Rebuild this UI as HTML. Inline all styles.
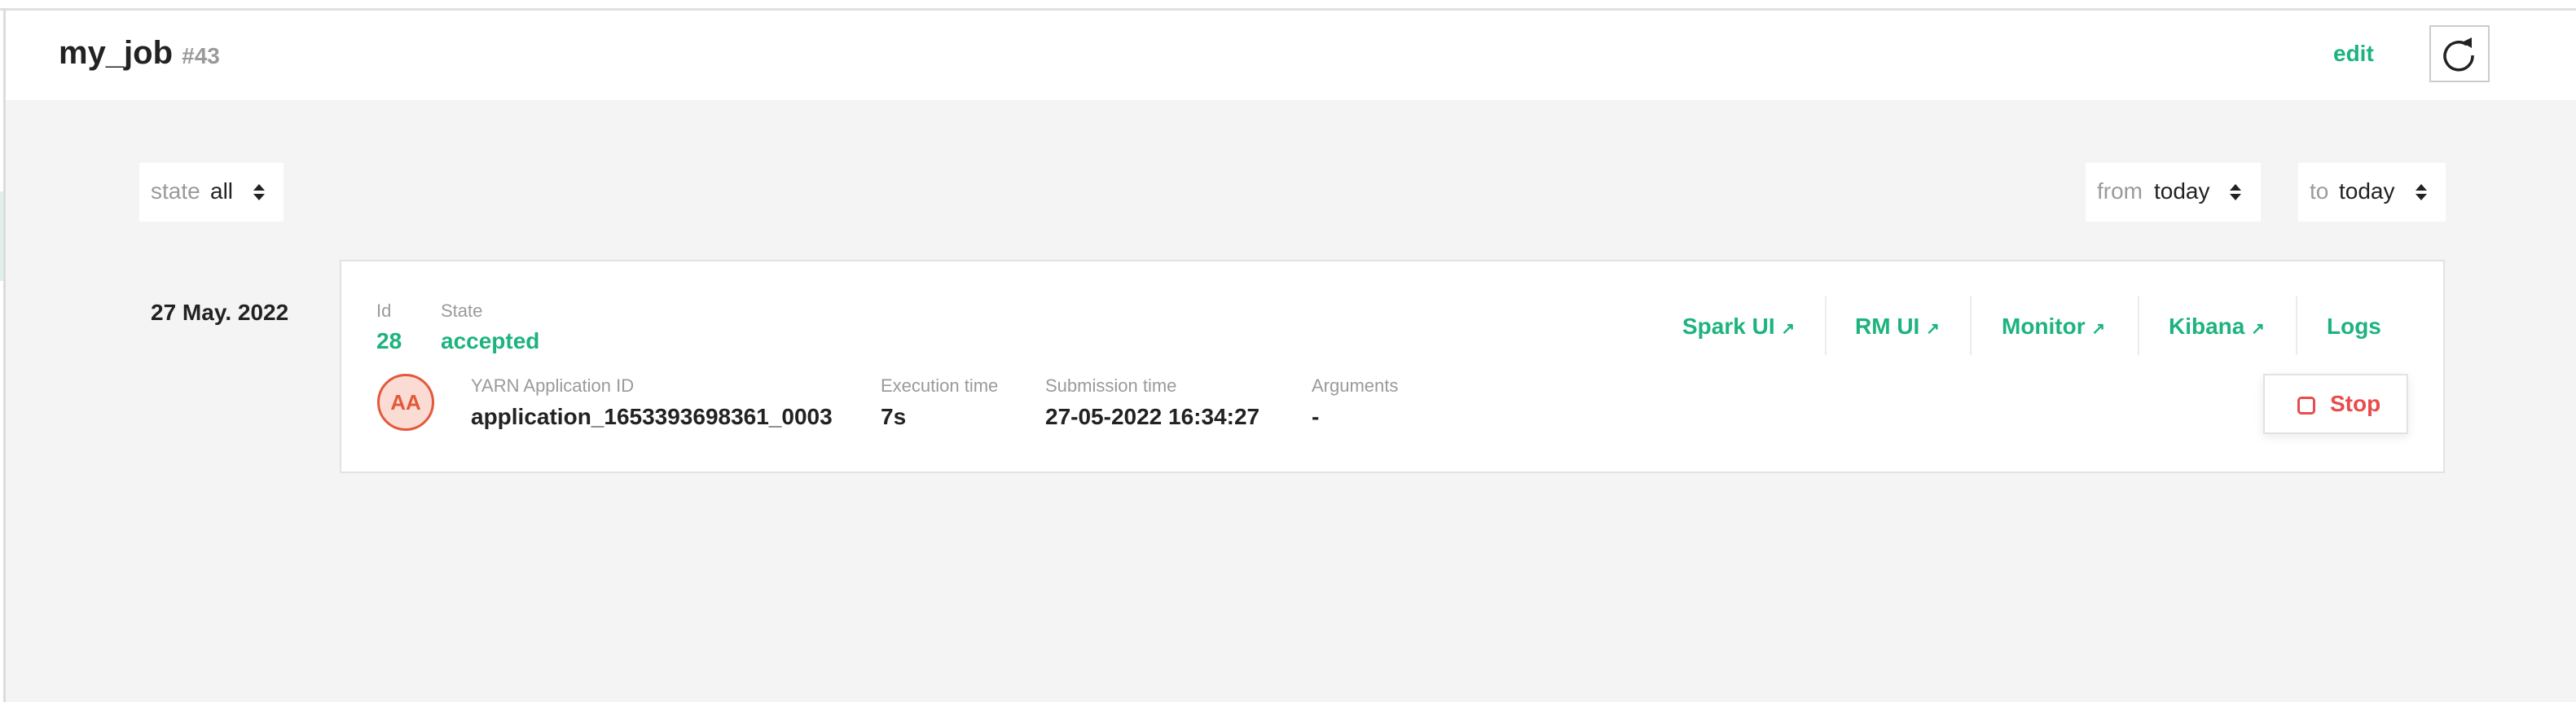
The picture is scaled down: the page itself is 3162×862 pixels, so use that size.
<!DOCTYPE html>
<html><head><meta charset="utf-8"><style>
*{margin:0;padding:0;box-sizing:border-box}
body{width:3162px;height:862px;background:#fff;font-family:"Liberation Sans",sans-serif;position:relative;overflow:hidden}
.a{position:absolute;white-space:nowrap}
.g{color:#1db37e;font-weight:bold}
.lbl{color:#9a9a9a;font-size:22px}
.val{color:#222;font-size:28px;font-weight:bold}
.sel{background:#fff;height:72px;top:200px;font-size:28px}
.arr{position:absolute;width:0;height:0;border-left:7px solid transparent;border-right:7px solid transparent}
.sep{position:absolute;top:364px;width:2px;height:72px;background:#ececec}
</style></head><body>
<div class="a" style="left:0;top:10px;width:3162px;height:3px;background:#e0e0e0"></div>
<div class="a" style="left:4px;top:10px;width:3px;height:852px;background:#dcdcdc"></div>
<div class="a" style="left:0;top:235px;width:4px;height:110px;background:#dff0e9"></div>
<div class="a" style="left:7px;top:123px;width:3155px;height:739px;background:#f4f4f4"></div>

<div class="a" style="left:72px;top:43px;font-size:40px;font-weight:bold;color:#222">my_job <span style="font-size:28px;color:#9a9a9a">#43</span></div>
<div class="a g" style="left:2864px;top:50px;font-size:28px">edit</div>
<div class="a" style="left:2982px;top:31px;width:74px;height:70px;border:2px solid #ccc;background:#fff">
<svg width="70" height="66" viewBox="0 0 70 66"><path d="M44 22 A17 17 0 1 0 51 35" fill="none" stroke="#222" stroke-width="3.5"/><path d="M38 19 L50 13 L50 26 Z" fill="#222"/></svg></div>

<div class="a sel" style="left:171px;width:177px"><span class="a" style="left:14px;top:19px;color:#9a9a9a">state</span><span class="a" style="left:87px;top:19px;color:#222">all</span><div class="arr" style="left:140px;top:26px;border-bottom:8px solid #222"></div><div class="arr" style="left:140px;top:38px;border-top:8px solid #222"></div></div>
<div class="a sel" style="left:2560px;width:215px"><span class="a" style="left:14px;top:19px;color:#9a9a9a">from</span><span class="a" style="left:84px;top:19px;color:#222">today</span><div class="arr" style="left:177px;top:26px;border-bottom:8px solid #222"></div><div class="arr" style="left:177px;top:38px;border-top:8px solid #222"></div></div>
<div class="a sel" style="left:2821px;width:181px"><span class="a" style="left:14px;top:19px;color:#9a9a9a">to</span><span class="a" style="left:50px;top:19px;color:#222">today</span><div class="arr" style="left:144px;top:26px;border-bottom:8px solid #222"></div><div class="arr" style="left:144px;top:38px;border-top:8px solid #222"></div></div>

<div class="a val" style="left:185px;top:368px">27 May. 2022</div>

<div class="a" style="left:417px;top:319px;width:2584px;height:262px;background:#fff;border:2px solid #e2e2e2"></div>
<div class="a lbl" style="left:462px;top:369px">Id</div>
<div class="a lbl" style="left:541px;top:369px">State</div>
<div class="a g" style="left:462px;top:403px;font-size:28px">28</div>
<div class="a g" style="left:541px;top:403px;font-size:28px">accepted</div>
<div class="a" style="left:463px;top:459px;width:70px;height:70px;border-radius:50%;border:3px solid #e4583a;background:#fadcd4;color:#e4583a;font-weight:bold;font-size:26px;text-align:center;line-height:64px">AA</div>
<div class="a lbl" style="left:578px;top:461px">YARN Application ID</div>
<div class="a val" style="left:578px;top:496px">application_1653393698361_0003</div>
<div class="a lbl" style="left:1081px;top:461px">Execution time</div>
<div class="a val" style="left:1081px;top:496px">7s</div>
<div class="a lbl" style="left:1283px;top:461px">Submission time</div>
<div class="a val" style="left:1283px;top:496px">27-05-2022 16:34:27</div>
<div class="a lbl" style="left:1610px;top:461px">Arguments</div>
<div class="a val" style="left:1610px;top:496px">-</div>

<div class="a g" style="left:2065px;top:385px;font-size:28px">Spark UI <span style="font-size:20px">↗</span></div>
<div class="sep" style="left:2240px"></div>
<div class="a g" style="left:2277px;top:385px;font-size:28px">RM UI <span style="font-size:20px">↗</span></div>
<div class="sep" style="left:2418px"></div>
<div class="a g" style="left:2457px;top:385px;font-size:28px">Monitor <span style="font-size:20px">↗</span></div>
<div class="sep" style="left:2624px"></div>
<div class="a g" style="left:2662px;top:385px;font-size:28px">Kibana <span style="font-size:20px">↗</span></div>
<div class="sep" style="left:2818px"></div>
<div class="a g" style="left:2856px;top:385px;font-size:28px">Logs</div>

<div class="a" style="left:2778px;top:459px;width:178px;height:74px;background:#fff;border:2px solid #e2e2e2;box-shadow:0 4px 12px rgba(0,0,0,0.08)">
<div class="a" style="left:40px;top:26px;width:22px;height:22px;border:3px solid #e84c4c;border-radius:5px"></div>
<div class="a" style="left:80px;top:19px;font-size:28px;font-weight:bold;color:#e84c4c">Stop</div></div>
</body></html>
